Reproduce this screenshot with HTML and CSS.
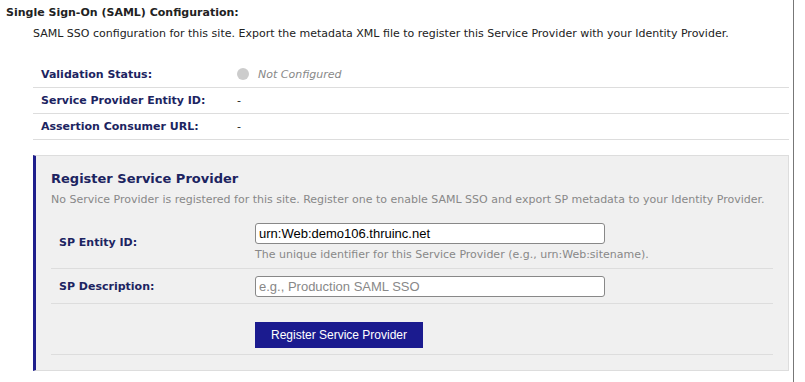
FILE: index.html
```html
<!DOCTYPE html>
<html lang="en">
<head>
  <meta charset="UTF-8">
  <meta name="viewport" content="width=device-width, initial-scale=1.0">
  <title>SAML Configuration</title>
  <link rel="stylesheet" href="styles.css">
</head>
<body>
  <div class="page">
    <div class="section-title">Single Sign-On (SAML) Configuration:</div>
    <div class="section-body">
      <p class="intro">SAML SSO configuration for this site. Export the metadata XML file to register this Service Provider with your Identity Provider.</p>

      <!-- Current status -->
      <table class="status-table">
        <tr>
          <th>Validation Status:</th>
          <td><span class="status-dot"></span><span class="status-text">Not Configured</span></td>
        </tr>
        <tr>
          <th>Service Provider Entity ID:</th>
          <td>-</td>
        </tr>
        <tr>
          <th>Assertion Consumer URL:</th>
          <td>-</td>
        </tr>
      </table>

      <!-- Register panel -->
      <div class="register-panel">
        <h3>Register Service Provider</h3>
        <p class="panel-note">No Service Provider is registered for this site. Register one to enable SAML SSO and export SP metadata to your Identity Provider.</p>
        <table class="form-table">
          <tr>
            <th>SP Entity ID:</th>
            <td>
              <input type="text" class="text-input" value="urn:Web:demo106.thruinc.net">
              <div class="hint">The unique identifier for this Service Provider (e.g., urn:Web:sitename).</div>
            </td>
          </tr>
          <tr>
            <th>SP Description:</th>
            <td><input type="text" class="text-input" placeholder="e.g., Production SAML SSO"></td>
          </tr>
          <tr>
            <th></th>
            <td class="button-cell"><button class="register-btn">Register Service Provider</button></td>
          </tr>
        </table>
      </div>
    </div>
  </div>
</body>
</html>
```

FILE: styles.css
```css
/* Page base */
body {
  margin: 0;
  padding: 0;
  font-family: "DejaVu Sans", Verdana, sans-serif;
  font-size: 11px;
  color: #222;
  background: #fff;
}

.page {
  width: 794px;
  min-height: 382px;
  border-right: 1px solid #777;
  box-sizing: border-box;
}

.section-title {
  font-weight: bold;
  padding: 5px 0 0 6px;
  line-height: 15px;
}

.section-body {
  margin-left: 33px;
  width: 756px;
}

.intro {
  margin: 6px 0 0 0;
  line-height: 15px;
}

/* Status table */
.status-table {
  width: 100%;
  border-collapse: collapse;
  margin-top: 21px;
}

.status-table th,
.status-table td {
  height: 25px;
  padding: 0 8px;
  border-bottom: 1px solid #ddd;
  text-align: left;
  vertical-align: middle;
}

.status-table th {
  width: 180px;
  color: #1c2461;
  font-weight: bold;
}

.status-dot {
  display: inline-block;
  width: 12px;
  height: 12px;
  border-radius: 50%;
  background-color: #ccc;
  vertical-align: -2px;
  margin-right: 9px;
}

.status-text {
  color: #888;
  font-style: italic;
}

/* Register panel */
.register-panel {
  margin-top: 15px;
  background-color: #f0f0f0;
  border: 1px solid #ddd;
  border-left: 3px solid #1e1e8c;
  padding: 14px 15px 15px 15px;
}

.register-panel h3 {
  margin: 0;
  font-size: 13px;
  line-height: 17px;
  color: #1c2461;
}

.panel-note {
  margin: 5px 0 0 0;
  color: #888;
  line-height: 15px;
}

.form-table {
  width: 100%;
  border-collapse: collapse;
  margin-top: 9px;
}

.form-table th,
.form-table td {
  padding: 7px 8px 6px 8px;
  border-bottom: 1px solid #ddd;
  text-align: left;
  vertical-align: middle;
}

.form-table th {
  width: 180px;
  color: #1c2461;
  font-weight: bold;
}

.text-input {
  width: 350px;
  height: 21px;
  box-sizing: border-box;
  border: 1px solid #888;
  border-radius: 3px;
  padding: 0 3px;
  font-family: "Liberation Sans", Arial, sans-serif;
  font-size: 13px;
  color: #000;
  background: #fff;
  display: block;
}

.text-input::placeholder {
  color: #888;
}

.hint {
  color: #888;
  margin-top: 3px;
  line-height: 15px;
}

.form-table .button-cell {
  padding-top: 18px;
  padding-bottom: 6px;
}

.register-btn {
  display: block;
  width: 168px;
  height: 26px;
  border: none;
  background-color: #1b1b8f;
  color: #fff;
  font-family: "Liberation Sans", Arial, sans-serif;
  font-size: 12px;
  cursor: pointer;
  padding: 0;
}
```
